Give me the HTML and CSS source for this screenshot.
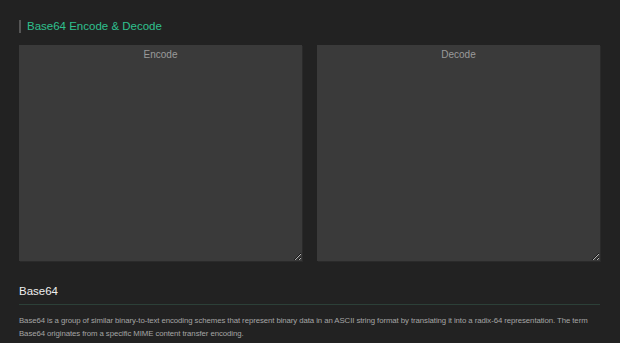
FILE: index.html
```html
<!DOCTYPE html>
<html lang="en">
<head>
    <meta charset="UTF-8">
    <title>Base64 Encode &amp; Decode</title>
    <link rel="stylesheet" href="styles.css">
</head>
<body>
    <div class="container">
        <h2 class="tool-title">Base64 Encode &amp; Decode</h2>
        <div class="panes">
            <textarea class="pane" placeholder="Encode"></textarea>
            <textarea class="pane" placeholder="Decode"></textarea>
        </div>
        <div class="info">
            <h3>Base64</h3>
            <p>Base64 is a group of similar binary-to-text encoding schemes that represent binary data in an ASCII string format by translating it into a radix-64 representation. The term Base64 originates from a specific MIME content transfer encoding.</p>
        </div>
    </div>
</body>
</html>
```

FILE: styles.css
```css
body {
    font-family: "Liberation Sans", Arial, sans-serif;
    background-color: #222222;
    margin: 0;
}

.container {
    padding: 0 20px 0 19px;
}

.tool-title {
    margin: 0 0 12px;
    padding-top: 19px;
    display: flex;
    align-items: flex-start;
    color: #2fc08e;
    font-size: 11.5px;
    font-weight: normal;
    line-height: 14px;
}

.tool-title:before {
    content: "";
    width: 2px;
    height: 13px;
    background-color: #555;
    margin-right: 6px;
    margin-top: 1px;
}

.panes {
    display: flex;
    gap: 15px;
}

.pane {
    flex: 1;
    height: 216px;
    margin: 0;
    border: none;
    outline: none;
    background-color: #3a3a3a;
    color: #ddd;
    font-family: "Liberation Sans", Arial, sans-serif;
    font-size: 10px;
    text-align: center;
    padding: 4px 6px;
    box-sizing: border-box;
    box-shadow: 1px 1px 0 #2a2a2a;
    display: block;
}

.pane::placeholder {
    color: #9a9a9a;
}

.info h3 {
    margin: 0;
    padding-top: 23px;
    padding-bottom: 6px;
    color: #eee;
    font-size: 11.5px;
    font-weight: normal;
    line-height: 14px;
    border-bottom: 1px solid #2c4038;
}

.info p {
    margin: 9px 0 0;
    color: #a5a5a5;
    font-size: 7.8px;
    letter-spacing: -0.08px;
    line-height: 13px;
}
```
